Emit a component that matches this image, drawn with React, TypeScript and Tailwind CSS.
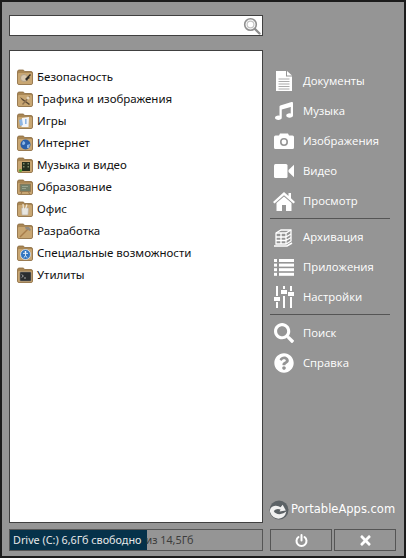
import { FaMusic, FaQuestionCircle, FaSearch, FaTimes } from "react-icons/fa"
import type { ReactNode } from "react"

function Folder({ children }: { children?: ReactNode }) {
  return (
    <svg width="16" height="16" viewBox="0 0 16 16" className="shrink-0">
      <path d="M0.5 3 Q0.5 1 2 1 L6 1 Q7 1 7.5 2.5 L14 2.5 Q15.5 2.5 15.5 4 L15.5 14 Q15.5 15.5 14 15.5 L2 15.5 Q0.5 15.5 0.5 14 Z" fill="#a98755" stroke="#8c6a3e" strokeWidth="0.8" />
      <rect x="1" y="4" width="14" height="11" rx="1" fill="#c8a672" />
      {children}
    </svg>
  )
}

const categories: { name: string; icon: ReactNode }[] = [
  {
    name: "Безопасность",
    icon: (
      <>
        <circle cx="7" cy="9" r="3.5" fill="#d9c7ac" stroke="#a99a84" strokeWidth="0.8" />
        <path d="M8 10 L13 5 L14 6 L12 8 L13 9 L11 10 L10 12 Z" fill="#2d2a26" />
      </>
    ),
  },
  {
    name: "Графика и изображения",
    icon: (
      <>
        <path d="M3 6 L6 8 L13 13 L12 14 L5 9 Z" fill="#5c4a36" />
        <path d="M12 5 L5 13 L6 14 L13 6 Z" fill="#8c6f4e" />
        <circle cx="11" cy="7" r="1.5" fill="#e6d8c0" />
      </>
    ),
  },
  {
    name: "Игры",
    icon: (
      <>
        <path d="M5 5 L12 4 L11.5 14 L4.5 14 Z" fill="#f2f4f8" />
        <path d="M2 7 L5 6 L6 12 L3 13 Z" fill="#8fb6e3" />
        <rect x="8" y="6" width="1.6" height="5" fill="#8fb6e3" />
      </>
    ),
  },
  {
    name: "Интернет",
    icon: (
      <>
        <circle cx="8.5" cy="9.5" r="5" fill="#2a5fa8" />
        <path d="M6 6 Q9 7 8 9 Q6 11 5 9 Z M10 10 L13 9 L12 13 L10 13 Z" fill="#8db7e6" />
      </>
    ),
  },
  {
    name: "Музыка и видео",
    icon: (
      <>
        <rect x="5" y="5" width="8" height="9" fill="#25301f" />
        <rect x="6" y="6" width="1.5" height="1.5" fill="#7d8a6b" />
        <rect x="6" y="9" width="1.5" height="1.5" fill="#7d8a6b" />
        <rect x="10.5" y="6" width="1.5" height="1.5" fill="#7d8a6b" />
        <rect x="10.5" y="9" width="1.5" height="1.5" fill="#7d8a6b" />
        <circle cx="3.5" cy="13.5" r="1.6" fill="#5fa53a" />
      </>
    ),
  },
  {
    name: "Образование",
    icon: (
      <>
        <rect x="3" y="5" width="10.5" height="7.5" fill="#73806a" stroke="#93754e" strokeWidth="0.8" />
        <path d="M5 7.5 L11 7.5 M5 9.5 L9 9.5" stroke="#aab3a0" strokeWidth="0.7" />
        <path d="M5 12.5 L4 15 M11.5 12.5 L12.5 15" stroke="#93754e" />
      </>
    ),
  },
  {
    name: "Офис",
    icon: (
      <>
        <path d="M4.5 7 L11.5 7 L11 14 L5 14 Z" fill="#e8e6e0" stroke="#b3ada3" strokeWidth="0.6" />
        <path d="M6.5 8 L6 3 M8.5 8 L10 3.5" stroke="#efe9dc" strokeWidth="1.2" />
      </>
    ),
  },
  {
    name: "Разработка",
    icon: (
      <>
        <path d="M3 14 L11 6" stroke="#a87d4a" strokeWidth="1.4" />
        <path d="M8 4 L12 4 L14 7 L12.5 8 L10 6 L9 7 Z" fill="#8f8a82" />
      </>
    ),
  },
  {
    name: "Специальные возможности",
    icon: (
      <>
        <circle cx="8.5" cy="9.5" r="5" fill="#2f74c0" stroke="#dfe8f2" strokeWidth="0.8" />
        <circle cx="8.5" cy="7" r="0.9" fill="#fff" />
        <path d="M6 8.4 L11 8.4 M8.5 8.4 L8.5 10.4 L7 12.6 M8.5 10.4 L10 12.6" stroke="#fff" strokeWidth="0.8" fill="none" />
      </>
    ),
  },
  {
    name: "Утилиты",
    icon: (
      <>
        <rect x="3" y="5" width="11" height="9" rx="0.8" fill="#2a2d2f" stroke="#777" strokeWidth="0.6" />
        <path d="M4.6 7.5 L6.4 9 L4.6 10.5 M7 11 L9 11" stroke="#d8d8d8" strokeWidth="0.7" fill="none" />
      </>
    ),
  },
]

function DocIcon() {
  return (
    <svg width="16" height="20" viewBox="0 0 16 20">
      <path d="M0 0 L10 0 L10 5.5 L16 5.5 L16 20 L0 20 Z" fill="#fff" />
      <path d="M11 0 L16 4.5 L11 4.5 Z" fill="#fff" />
      <path d="M2.5 8 H13.5 M2.5 10.5 H13.5 M2.5 13 H13.5 M2.5 15.5 H13.5 M2.5 18 H13.5" stroke="#959595" strokeWidth="0.8" />
    </svg>
  )
}

function CameraIcon() {
  return (
    <svg width="20" height="16" viewBox="0 0 20 16">
      <path fillRule="evenodd" d="M1.5 2.5 H5 L6 0.5 H14 L15 2.5 H18.5 Q20 2.5 20 4 V14.5 Q20 16 18.5 16 H1.5 Q0 16 0 14.5 V4 Q0 2.5 1.5 2.5 Z M10 5 A4 4 0 1 0 10 13 A4 4 0 1 0 10 5 Z" fill="#fff" />
      <circle cx="10" cy="9" r="2.4" fill="#fff" />
    </svg>
  )
}

function VideoIcon() {
  return (
    <svg width="20" height="14" viewBox="0 0 20 14" fill="#fff">
      <rect x="0" y="0" width="13.5" height="14" rx="1.5" />
      <path d="M14.5 6 L20 0.8 V13.2 L14.5 8 Z" />
    </svg>
  )
}

function HomeIcon() {
  return (
    <svg width="22" height="19" viewBox="0 0 22 19" fill="#fff">
      <path d="M11 0 L15.5 4 V1 H18 V6.3 L22 10 L20.5 11.5 L11 3.2 L1.5 11.5 L0 10 Z" />
      <path d="M3.5 11 L11 4.6 L18.5 11 V19 H13 V13 H9 V19 H3.5 Z" />
    </svg>
  )
}

function ListIcon() {
  return (
    <svg width="20" height="17" viewBox="0 0 20 17" fill="#fff">
      <rect x="0" y="0" width="3" height="3" />
      <rect x="5" y="0" width="15" height="3" />
      <rect x="0" y="4.6" width="3" height="3" />
      <rect x="5" y="4.6" width="15" height="3" />
      <rect x="0" y="9.2" width="3" height="3" />
      <rect x="5" y="9.2" width="15" height="3" />
      <rect x="0" y="13.8" width="3" height="3" />
      <rect x="5" y="13.8" width="15" height="3" />
    </svg>
  )
}

function ArchiveIcon() {
  return (
    <svg width="20" height="20" viewBox="0 0 20 20" fill="none" stroke="#fff" strokeWidth="1.3">
      <path d="M2 6 L7 3 L17 3 L17 14 L12 17 L2 17 Z" />
      <path d="M2 6 L12 6 L17 3 M12 6 V17 M7 6 V17 M2 10 H12 M2 13.5 H12 M12 10 L17 7 M12 13.5 L17 10.5" />
      <path d="M0 19 H13 L18 16" strokeWidth="1.6" />
    </svg>
  )
}

function SlidersIcon() {
  return (
    <svg width="20" height="22" viewBox="0 0 20 22" fill="#fff">
      <rect x="2" y="0" width="2" height="10" />
      <rect x="2" y="16" width="2" height="6" />
      <rect x="0" y="11" width="6" height="4" />
      <rect x="9" y="0" width="2" height="3" />
      <rect x="9" y="10" width="2" height="12" />
      <rect x="7" y="4" width="6" height="4" />
      <rect x="16" y="0" width="2" height="5" />
      <rect x="16" y="11" width="2" height="11" />
      <rect x="14" y="6" width="6" height="4" />
    </svg>
  )
}

function PowerIcon() {
  return (
    <svg width="13" height="13" viewBox="0 0 13 13" fill="none" stroke="#fff" strokeWidth="2">
      <path d="M6.5 1 V6.5" strokeLinecap="round" />
      <path d="M3.5 3 A5 5 0 1 0 9.5 3" strokeLinecap="round" />
    </svg>
  )
}

function PortableLogo() {
  return (
    <svg width="20" height="20" viewBox="0 0 19 19" className="-ml-[1px] shrink-0">
      <circle cx="9.5" cy="9.5" r="9" fill="#5c6266" />
      <path d="M0.8 11 Q1 6 6 5.5 Q9 5.3 11 7 L13 4.5 L16 10 L10 11 L11 9 Q7 7.5 4.5 10.5 Q6 13.5 10 13.5 Q14 13 16.5 11 Q15 17.5 9 17.7 Q3 17.5 0.8 11 Z" fill="#f1f1f1" />
    </svg>
  )
}

function MagnifierIcon() {
  return (
    <svg width="18" height="18" viewBox="0 0 18 18" fill="none">
      <circle cx="7.5" cy="7.5" r="5.8" fill="#fff" stroke="#8f8f8f" strokeWidth="1.6" />
      <circle cx="7.5" cy="7.5" r="3.4" stroke="#c4c4c4" strokeWidth="1.2" />
      <path d="M12 12 L16.5 16.5" stroke="#8f8f8f" strokeWidth="2.4" strokeLinecap="round" />
    </svg>
  )
}

function NavItem({ icon, label }: { icon: ReactNode; label: string }) {
  return (
    <div className="flex h-[30px] items-center">
      <div className="flex w-[28px] shrink-0 items-center justify-center text-white">{icon}</div>
      <span className="ml-[5px] text-[11.3px] text-white font-['Open_Sans',sans-serif]">{label}</span>
    </div>
  )
}

export default function App() {
  return (
    <div className="flex h-[558px] w-[406px] gap-[7px] border-2 border-[#1c1c1c] bg-[#959595] pb-[5px] pl-[7px] pr-[10px] pt-[13px]">
      {/* left column */}
      <div className="flex w-[254px] shrink-0 flex-col">
        <div className="flex h-[21px] items-center justify-end border border-[#404040] bg-white pr-[1px]">
          <MagnifierIcon />
        </div>
        <div className="mt-[14px] flex-1 border border-[#404040] bg-white pl-[7px] pt-[15px] font-['Noto_Sans',sans-serif] text-[11.5px] text-[#111]">
          {categories.map((c) => (
            <div key={c.name} className="flex h-[22px] items-center gap-[4px]">
              <Folder>{c.icon}</Folder>
              <span>{c.name}</span>
            </div>
          ))}
        </div>
        <div className="relative mt-[6px] flex h-[22px] items-center border border-[#555] font-['Noto_Sans',sans-serif] text-[10.8px]">
          <div className="absolute inset-y-0 left-0 w-[137px] bg-[#06324a]" />
          <span className="relative pl-[3px] text-[#e8e8e8]">Drive (C:) 6,6Гб свободно</span>
          <span className="relative ml-[4px] text-[#3c3c3c]">из 14,5Гб</span>
        </div>
      </div>

      {/* right column */}
      <div className="flex flex-1 flex-col">
        <div className="mt-[51px]">
          <NavItem icon={<DocIcon />} label="Документы" />
          <NavItem icon={<FaMusic size={18} />} label="Музыка" />
          <NavItem icon={<CameraIcon />} label="Изображения" />
          <NavItem icon={<VideoIcon />} label="Видео" />
          <NavItem icon={<HomeIcon />} label="Просмотр" />
        </div>
        <div className="mb-[3px] mt-[2px] h-px w-[120px] bg-[#555]" />
        <NavItem icon={<ArchiveIcon />} label="Архивация" />
        <NavItem icon={<ListIcon />} label="Приложения" />
        <NavItem icon={<SlidersIcon />} label="Настройки" />
        <div className="mb-[3px] mt-[2px] h-px w-[120px] bg-[#555]" />
        <NavItem icon={<FaSearch size={20} />} label="Поиск" />
        <NavItem icon={<FaQuestionCircle size={20} />} label="Справка" />

        <div className="mt-auto flex items-center gap-[2px] pb-[9px] font-['DejaVu_Sans',sans-serif] text-[11.5px] text-white">
          <PortableLogo />
          <span>PortableApps.com</span>
        </div>
        <div className="flex h-[22px] gap-[2px]">
          <button className="flex w-[62px] items-center justify-center border border-[#555]">
            <PowerIcon />
          </button>
          <button className="flex w-[62px] items-center justify-center border border-[#555] text-white">
            <FaTimes size={15} />
          </button>
        </div>
      </div>
    </div>
  )
}
